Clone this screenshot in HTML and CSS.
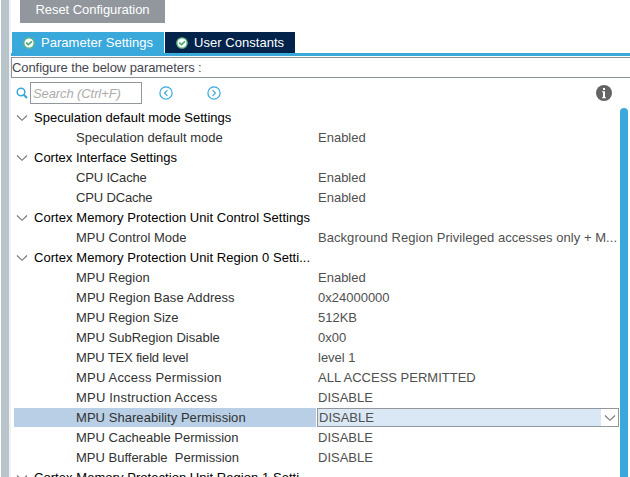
FILE: index.html
```html
<!DOCTYPE html>
<html lang="en"><head><meta charset="utf-8"><title>Parameter Settings</title><link rel="stylesheet" href="styles.css"></head>
<body>
<svg width="0" height="0" class="defs"><defs>
<symbol id="ok" viewBox="0 0 12 12"><circle cx="6" cy="6" r="5.2" fill="#fff" stroke="#5fb482" stroke-width="1.3"/><path d="M3.2 5.6 5.4 7.7 9 4.4" fill="none" stroke="#4aaa70" stroke-width="1.7"/></symbol>
<symbol id="down" viewBox="0 0 12 8"><path d="M1 1.5 6 6.3 11 1.5" fill="none" stroke="#777" stroke-width="1.15"/></symbol>
</defs></svg>
<div class="app">
<div class="splitter"></div>
<main>
<button class="reset">Reset Configuration</button>
<nav class="tabs">
<div class="tab active"><svg class="ok"><use href="#ok"/></svg><span>Parameter Settings</span></div>
<div class="tab"><svg class="ok"><use href="#ok"/></svg><span>User Constants</span></div>
</nav>
<div class="caption">Configure the below parameters :</div>
<div class="toolbar">
<svg class="magnifier" viewBox="0 0 12 12"><circle cx="5" cy="5" r="3.8" fill="none" stroke="#35a5dc" stroke-width="1.5"/><path d="M7.8 7.8 11 11" stroke="#35a5dc" stroke-width="2"/></svg>
<div class="search">Search (Ctrl+F)</div>
<svg class="nav prev" viewBox="0 0 14 14"><circle cx="7" cy="7" r="6.1"/><path d="M8.4 4.2 5.6 7l2.8 2.8"/></svg>
<svg class="nav next" viewBox="0 0 14 14"><circle cx="7" cy="7" r="6.1"/><path d="M5.6 4.2 8.4 7 5.6 9.8"/></svg>
<svg class="info" viewBox="0 0 16 16"><circle cx="8" cy="8" r="8" fill="#646464"/><path d="M7 3h2v2H7zM6 6.3h3v6h1v1H6v-1h1v-5H6z" fill="#fff"/></svg>
</div>
<div class="content">
<div class="tree">
<div class="group"><svg class="down"><use href="#down"/></svg><span>Speculation default mode Settings</span></div>
<div class="row"><span class="name">Speculation default mode</span><span class="value">Enabled</span></div>
<div class="group"><svg class="down"><use href="#down"/></svg><span>Cortex Interface Settings</span></div>
<div class="row"><span class="name tight">CPU ICache</span><span class="value">Enabled</span></div>
<div class="row"><span class="name tight">CPU DCache</span><span class="value">Enabled</span></div>
<div class="group loose"><svg class="down"><use href="#down"/></svg><span>Cortex Memory Protection Unit Control Settings</span></div>
<div class="row"><span class="name">MPU Control Mode</span><span class="value loose">Background Region Privileged accesses only + M...</span></div>
<div class="group loose"><svg class="down"><use href="#down"/></svg><span>Cortex Memory Protection Unit Region 0 Setti...</span></div>
<div class="row"><span class="name">MPU Region</span><span class="value">Enabled</span></div>
<div class="row"><span class="name loose">MPU Region Base Address</span><span class="value">0x24000000</span></div>
<div class="row"><span class="name">MPU Region Size</span><span class="value">512KB</span></div>
<div class="row"><span class="name">MPU SubRegion Disable</span><span class="value">0x00</span></div>
<div class="row"><span class="name tight">MPU TEX field level</span><span class="value">level 1</span></div>
<div class="row"><span class="name looser">MPU Access Permission</span><span class="value">ALL ACCESS PERMITTED</span></div>
<div class="row"><span class="name looser">MPU Instruction Access</span><span class="value">DISABLE</span></div>
<div class="row selected"><span class="name loose">MPU Shareability Permission</span><div class="combo"><span>DISABLE</span><div class="arrow"><svg class="down"><use href="#down"/></svg></div></div></div>
<div class="row"><span class="name">MPU Cacheable Permission</span><span class="value">DISABLE</span></div>
<div class="row"><span class="name">MPU Bufferable&nbsp; Permission</span><span class="value">DISABLE</span></div>
<div class="group loose"><svg class="down"><use href="#down"/></svg><span>Cortex Memory Protection Unit Region 1 Setti...</span></div>
</div>
<div class="scrollbar"></div>
</div>
</main>
</div>
</body></html>
```
FILE: styles.css
```css
* { box-sizing: border-box; }
body { margin: 0; background: #fff; font: 13px/20px "Liberation Sans", Arial, sans-serif; overflow: hidden; }
svg { display: block; flex: none; }
.defs { position: absolute; }
.app { display: flex; width: 630px; height: 477px; padding-left: 1px; overflow: hidden; }
.splitter { width: 10px; flex: none; background: #b9c4ca; border-right: 2px solid #f0f3f5; }
main { flex: 1; min-width: 0; display: flex; flex-direction: column; }
.reset { width: 145px; height: 23px; flex: none; margin-left: 9px; padding: 0 0 3px; border: 0; background: #91979d; color: #fff; font: inherit; letter-spacing: -.04px; line-height: 20px; }
.tabs { display: flex; gap: 1px; height: 24px; flex: none; margin-top: 9px; padding-left: 1px; border-bottom: 3px solid #39a9dc; }
.tab { display: flex; height: 21px; width: 130px; padding-left: 11px; gap: 6px; align-items: center; background: #03234b; color: #fff; letter-spacing: .04px; white-space: nowrap; }
.tab.active { width: 152px; background: #39a9dc; }
.ok { width: 12px; height: 12px; }
.caption { height: 21px; flex: none; margin-top: 1px; border: 1px solid #8c9299; border-right: 0; color: #464650; line-height: 20px; letter-spacing: -.08px; }
.toolbar { display: flex; align-items: center; height: 30px; flex: none; padding-left: 5px; }
.magnifier { width: 12px; height: 12px; }
.search { width: 112px; height: 22px; margin-left: 2px; border: 1px solid #91979d; padding-left: 2px; color: #acacac; font-style: italic; line-height: 21px; letter-spacing: -.1px; }
.nav { width: 14px; height: 14px; fill: none; stroke: #39a9dc; stroke-width: 1.2; }
.prev { margin-left: 17px; }
.next { margin-left: 34px; }
.info { width: 16px; height: 16px; margin-left: auto; margin-right: 18px; }
.content { display: flex; flex: 1; min-height: 0; }
.tree { width: 609px; flex: none; overflow: hidden; }
.group, .row { display: flex; height: 20px; white-space: nowrap; }
.group { align-items: center; padding-left: 5px; gap: 6px; color: #000; }
.down { width: 12px; height: 8px; }
.row { padding-left: 3px; }
.name { width: 302px; padding-left: 62px; color: #323232; }
.value { padding-left: 2px; color: #505050; }
.tight { letter-spacing: -.16px; }
.loose { letter-spacing: .05px; }
.looser { letter-spacing: .19px; }
.selected .name { height: 19px; background: #b8cfe5; }
.combo { display: flex; width: 302px; height: 19px; margin-left: 1px; border: 1px solid #91979d; background: #dae8f5; color: #505050; line-height: 18px; }
.combo > span { flex: 1; padding-left: 1px; }
.arrow { display: flex; width: 17px; align-items: center; justify-content: center; background: #fff; }
.scrollbar { width: 8px; background: #39a9dc; border-radius: 4px 4px 0 0; }
```
